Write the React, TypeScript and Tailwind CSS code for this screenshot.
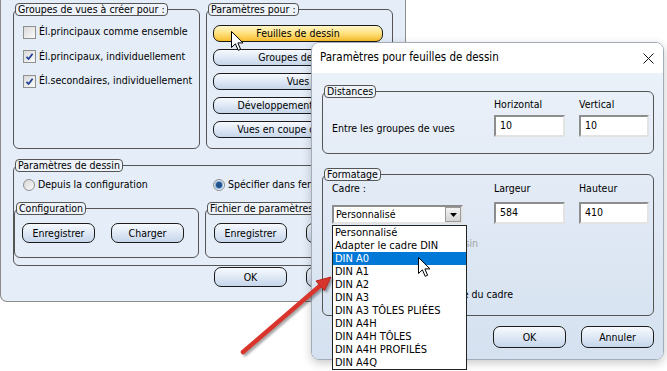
import React from "react";

const Legend = ({ children }: { children: React.ReactNode }) => (
  <legend className="ml-[1px] h-[13px] whitespace-nowrap rounded-[4px] border border-[#555] bg-[#eef3fa] px-[2px] text-[10.5px] leading-[11px]">
    {children}
  </legend>
);

const WinButton = ({
  label,
  className = "",
  hot = false,
}: {
  label: string;
  className?: string;
  hot?: boolean;
}) => (
  <button
    className={
      "overflow-hidden whitespace-nowrap rounded-[7px] border border-[#1b1b1b] bg-linear-to-b text-[10.5px] leading-none text-black " +
      (hot ? "from-[#fff6c8] via-[#ffe07a] to-[#f8bd22] " : "from-[#f7fafe] to-[#c6d6eb] ") +
      className
    }
  >
    {label}
  </button>
);

const Checkbox = ({ checked }: { checked?: boolean }) => (
  <span className="flex h-[13px] w-[13px] shrink-0 items-center justify-center border border-[#8e8f8f] bg-linear-to-br from-[#d9d9d9] to-[#fbfbfb]">
    {checked && (
      <svg width="9" height="9" viewBox="0 0 9 9">
        <path d="M1.5 4.8 L3.6 7 L7.6 1.8" fill="none" stroke="#1d3a94" strokeWidth="1.7" />
      </svg>
    )}
  </span>
);

const Radio = ({ checked }: { checked?: boolean }) => (
  <span className="flex h-[12px] w-[12px] shrink-0 items-center justify-center rounded-full border border-[#8e8f8f] bg-linear-to-br from-[#d6d6d6] to-[#fbfbfb]">
    {checked && <span className="h-[6px] w-[6px] rounded-full bg-[#22508a] ring-1 ring-[#7fb0e0]" />}
  </span>
);

const Field = ({ value, className = "" }: { value?: string; className?: string }) => (
  <div
    className={
      "flex h-[22px] items-center border-2 border-[#e3e3e3] border-t-[#8d8d8d] border-l-[#8d8d8d] bg-white pl-[4px] text-[10.5px] " +
      className
    }
  >
    {value}
  </div>
);

const Cursor = ({ x, y }: { x: number; y: number }) => (
  <svg
    className="pointer-events-none absolute"
    style={{ left: x, top: y }}
    width="14"
    height="21"
    viewBox="0 0 14 21"
  >
    <path
      d="M0.5 0.5 L0.5 16.5 L4.4 12.8 L7.2 19.3 L9.6 18.3 L6.9 11.9 L12 11.9 Z"
      fill="#fff"
      stroke="#000"
      strokeWidth="1"
      strokeLinejoin="round"
    />
  </svg>
);

const BackDialog = () => (
  <div className="absolute left-0 top-0 h-[302px] w-[406px] rounded-b-[7px] border-x border-b border-[#8c8c8c] bg-[#e5edf8] px-[12px] pt-[3px]">
    <div className="flex gap-[6px]">
      <fieldset className="h-[146px] w-[187px] min-w-0 rounded-[6px] border border-[#555]">
        <Legend>Groupes de vues à créer pour :</Legend>
        <div className="flex flex-col pl-[9px] pt-[4px]">
          {[
            { label: "Él.principaux comme ensemble", checked: false },
            { label: "Él.principaux, individuellement", checked: true },
            { label: "Él.secondaires, individuellement", checked: true },
          ].map((r) => (
            <div key={r.label} className="flex h-[24.5px] items-center gap-[3px] whitespace-nowrap text-[10.5px]">
              <Checkbox checked={r.checked} />
              <span>{r.label}</span>
            </div>
          ))}
        </div>
      </fieldset>
      <fieldset className="h-[146px] w-[187px] min-w-0 rounded-[6px] border border-[#555]">
        <Legend>Paramètres pour :</Legend>
        <div className="flex flex-col gap-[7px] pl-[6px] pt-[9px]">
          <WinButton hot label="Feuilles de dessin" className="h-[17px] w-[170px]" />
          <WinButton label="Groupes de vues" className="h-[17px] w-[170px]" />
          <WinButton label="Vues" className="h-[17px] w-[170px]" />
          <WinButton label="Développements de tôles" className="h-[17px] w-[170px]" />
          <WinButton label="Vues en coupe de profilés" className="h-[17px] w-[170px]" />
        </div>
      </fieldset>
    </div>

    <fieldset className="mt-[10px] h-[107px] w-[380px] min-w-0 rounded-[6px] border border-[#555]">
      <Legend>Paramètres de dessin</Legend>
      <div className="grid grid-cols-[185px_187px] gap-x-[6px]">
        <div className="mt-[6px] flex h-[14px] items-center gap-[3px] pl-[9px] text-[10.5px]">
          <Radio />
          <span>Depuis la configuration</span>
        </div>
        <div className="mt-[6px] flex h-[14px] items-center gap-[3px] whitespace-nowrap pl-[8px] text-[10.5px]">
          <Radio checked />
          <span>Spécifier dans fenêtre</span>
        </div>
        <fieldset className="mt-[10px] h-[56px] min-w-0 rounded-[6px] border border-[#555]">
          <Legend>Configuration</Legend>
          <div className="flex gap-[16px] pl-[7px] pt-[8px]">
            <WinButton label="Enregistrer" className="h-[20px] w-[73px]" />
            <WinButton label="Charger" className="h-[20px] w-[73px]" />
          </div>
        </fieldset>
        <fieldset className="mt-[10px] h-[56px] min-w-0 rounded-[6px] border border-[#555]">
          <Legend>Fichier de paramètres</Legend>
          <div className="flex gap-[19px] pl-[8px] pt-[8px]">
            <WinButton label="Enregistrer" className="h-[20px] w-[73px]" />
            <WinButton label="" className="h-[20px] w-[73px]" />
          </div>
        </fieldset>
      </div>
    </fieldset>

    <div className="mt-[1px] flex gap-[19px] pl-[201px]">
      <WinButton label="OK" className="h-[20px] w-[73px]" />
      <WinButton label="" className="h-[20px] w-[73px]" />
    </div>
  </div>
);

const FrontDialog = () => (
  <div className="absolute left-[311px] top-[42px] flex h-[318px] w-[353px] flex-col overflow-hidden rounded-[8px] border border-[#a3acb7] shadow-[0_3px_10px_rgba(0,0,0,0.22)]">
    <div className="flex h-[30px] shrink-0 items-center justify-between bg-white pl-[8px] pr-[9px]">
      <span className="text-[11.5px]">Paramètres pour feuilles de dessin</span>
      <svg width="11" height="11" viewBox="0 0 11 11">
        <path d="M0.5 0.5 L10.5 10.5 M10.5 0.5 L0.5 10.5" stroke="#111" strokeWidth="1" />
      </svg>
    </div>
    <div className="flex-1 bg-linear-to-b from-[#ebf1f9] to-[#d5e1f0] pl-[10px] pt-[12px]">
      <fieldset className="h-[69px] w-[332px] min-w-0 rounded-[6px] border border-[#555]">
        <Legend>Distances</Legend>
        <div className="grid grid-cols-[148px_71px_70px] gap-x-[14px] pl-[9px] text-[10.5px]">
          <span className="h-[12px]" />
          <span className="h-[12px] leading-[12px]">Horizontal</span>
          <span className="h-[12px] leading-[12px]">Vertical</span>
          <span className="mt-[5px] self-center pt-[5px]">Entre les groupes de vues</span>
          <Field value="10" className="mt-[5px]" />
          <Field value="10" className="mt-[5px]" />
        </div>
      </fieldset>

      <fieldset className="mt-[14px] h-[148px] w-[332px] min-w-0 rounded-[6px] border border-[#555]">
        <Legend>Formatage</Legend>
        <div className="grid grid-cols-[148px_71px_70px] gap-x-[14px] pl-[9px] text-[10.5px]">
          <span className="mt-[1px] h-[12px] leading-[12px]">Cadre :</span>
          <span className="mt-[1px] h-[12px] leading-[12px]">Largeur</span>
          <span className="mt-[1px] h-[12px] leading-[12px]">Hauteur</span>
          <div className="mt-[8px] flex h-[19px] w-[131px] items-center self-end border-2 border-[#e3e3e3] border-t-[#8d8d8d] border-l-[#8d8d8d] bg-white pl-[2px]">
            <span className="flex-1">Personnalisé</span>
            <span className="flex h-[15px] w-[16px] items-center justify-center border border-[#9a9a9a] bg-linear-to-b from-[#f4f4f4] to-[#d4d4d4]">
              <svg width="7" height="4" viewBox="0 0 7 4">
                <path d="M0 0 L7 0 L3.5 4 Z" fill="#000" />
              </svg>
            </span>
          </div>
          <Field value="584" className="mt-[8px]" />
          <Field value="410" className="mt-[8px]" />
        </div>
        <div className="mt-[13px] w-[155px] whitespace-nowrap text-right text-[10.5px] leading-[12px] text-[#a2a2a2]">
          dessin
        </div>
        <div className="mt-[39px] w-[190px] whitespace-nowrap text-right text-[10.5px] leading-[12px]">
          Échelle du cadre
        </div>
      </fieldset>

      <div className="mt-[10px] flex justify-end gap-[15px] pr-[9px]">
        <WinButton label="OK" className="h-[22px] w-[73px]" />
        <WinButton label="Annuler" className="h-[22px] w-[73px]" />
      </div>
    </div>
  </div>
);

const items = [
  "Personnalisé",
  "Adapter le cadre DIN",
  "DIN A0",
  "DIN A1",
  "DIN A2",
  "DIN A3",
  "DIN A3 TÔLES PLIÉES",
  "DIN A4H",
  "DIN A4H TÔLES",
  "DIN A4H PROFILÉS",
  "DIN A4Q",
];

const DropList = () => (
  <div className="absolute left-[332px] top-[225px] w-[135px] border border-[#222] bg-white text-[11px]">
    {items.map((it) => (
      <div
        key={it}
        className={
          "h-[13px] whitespace-nowrap pl-[2px] leading-[13px] " +
          (it === "DIN A0" ? "bg-[#0078d7] text-white" : "text-black")
        }
      >
        {it}
      </div>
    ))}
  </div>
);

const RedArrow = () => (
  <svg
    className="pointer-events-none absolute left-0 top-0 drop-shadow-[2px_2px_1px_rgba(0,0,0,0.35)]"
    width="667"
    height="371"
    viewBox="0 0 667 371"
  >
    <line x1="243" y1="352" x2="321" y2="285" stroke="#d8352d" strokeWidth="4.5" strokeLinecap="round" />
    <polygon points="331,277 324.5,290.5 316,281" fill="#d8352d" stroke="#b8241e" strokeWidth="1" strokeLinejoin="round" />
  </svg>
);

export default function App() {
  return (
    <div className="relative h-[371px] w-[667px] overflow-hidden bg-white font-['DejaVu_Sans_Condensed','Liberation_Sans',sans-serif] text-black">
      <BackDialog />
      <FrontDialog />
      <DropList />
      <RedArrow />
      <Cursor x={231} y={31} />
      <Cursor x={418} y={257} />
    </div>
  );
}
